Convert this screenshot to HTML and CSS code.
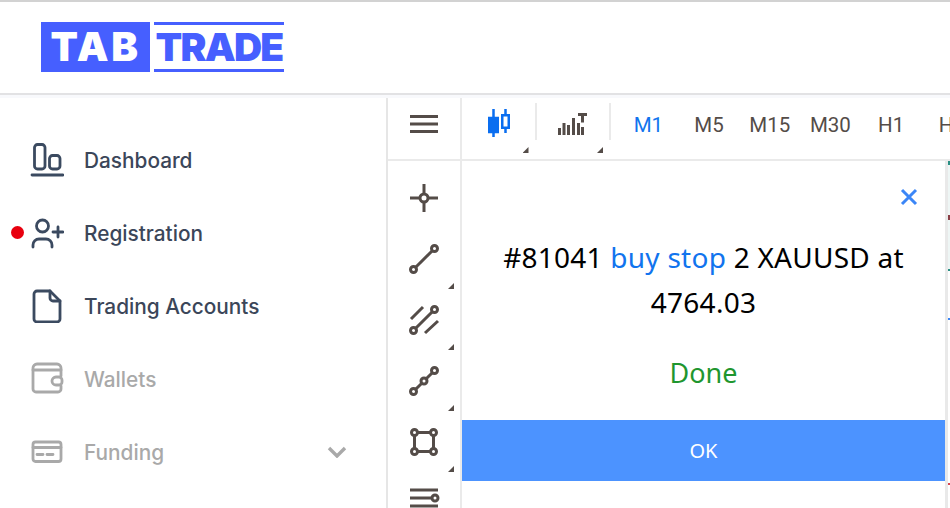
FILE: index.html
```html
<!DOCTYPE html>
<html lang="en">
  <head>
    <meta charset="UTF-8" />
    <meta name="viewport" content="width=device-width, initial-scale=1.0" />
    <title>TabTrade</title>
    <link rel="stylesheet" href="styles.css">
  </head>
  <body>
    <header class="header">
      <div class="logo">
        <span class="logo-tab">TAB</span>
        <span class="logo-trade">TRADE</span>
      </div>
    </header>

    <div class="main">
      <!-- Sidebar -->
      <nav class="sidebar">
        <a class="nav-item">
          <svg class="nav-icon" viewBox="0 0 34 34"><rect x="4.500" y="1.500" width="10.500" height="24.500" rx="3"/><rect x="19.500" y="12.500" width="10.500" height="13.500" rx="3"/><path d="M2 32h31"/></svg>
          <span>Dashboard</span>
        </a>
        <a class="nav-item">
          <i class="red-dot"></i>
          <svg class="nav-icon" viewBox="0 0 34 34"><circle cx="12.500" cy="10" r="6"/><path d="M3 31v-2a6 6 0 0 1 6-6h7a6 6 0 0 1 6 6v2M28 11v10M23 16h10"/></svg>
          <span>Registration</span>
        </a>
        <a class="nav-item">
          <svg class="nav-icon" viewBox="0 0 34 34"><path d="M7 2h13l10 10v18a3 3 0 0 1-3 3H7a3 3 0 0 1-3-3V5a3 3 0 0 1 3-3z"/><path d="M20 2v7a3 3 0 0 0 3 3h7"/></svg>
          <span>Trading Accounts</span>
        </a>
        <a class="nav-item disabled">
          <svg class="nav-icon" viewBox="0 0 34 34"><path d="M31 14v-8a4 4 0 0 0-4-4H7a4 4 0 0 0-4 4v21a3 3 0 0 0 3 3h22a3 3 0 0 0 3-3v-3"/><path d="M3 8h28M29 15h-3a4 4 0 0 0 0 8h3a3 3 0 0 0 3-3v-2a3 3 0 0 0-3-3z"/></svg>
          <span>Wallets</span>
        </a>
        <a class="nav-item disabled">
          <svg class="nav-icon" viewBox="0 0 34 34"><rect x="3" y="7" width="28" height="19.500" rx="2.500"/><path d="M3 12.500h28M7 19.500h6M17 19.500h6"/></svg>
          <span>Funding</span>
          <svg class="chevron" viewBox="0 0 20 12"><path d="M2 2l8 8 8-8"/></svg>
        </a>
      </nav>

      <!-- Terminal -->
      <section class="terminal">
        <div class="menu-cell">
          <svg class="menu-icon" viewBox="0 0 28 18"><path d="M0 1.500h28M0 9h28M0 16.500h28"/></svg>
        </div>

        <div class="topbar">
          <button class="chart-btn">
            <svg viewBox="0 0 24 28" class="candles"><path d="M5.500 0v28M17.500 0v24"/><rect class="solid" x="1.250" y="9" width="8.500" height="14"/><rect x="14.250" y="6.250" width="6.500" height="12.500"/></svg>
            <i class="corner"></i>
          </button>
          <button class="chart-btn">
            <svg viewBox="0 0 30 24" class="bars"><path d="M1.500 23v-7M6 23v-12M10.500 23v-10M15.500 23v-17M20.500 23v-12M24.500 23v-8M20 2.500h9M24.500 2.500v8"/></svg>
            <i class="corner"></i>
          </button>
          <div class="periods">
            <button class="period active">M1</button>
            <button class="period">M5</button>
            <button class="period">M15</button>
            <button class="period">M30</button>
            <button class="period">H1</button>
            <button class="period">H4</button>
          </div>
        </div>

        <div class="tools">
          <button class="tool">
            <svg viewBox="0 0 28 28"><circle cx="14" cy="14" r="4"/><path d="M14 0v9M14 19v9M0 14h9M19 14h9"/></svg>
          </button>
          <button class="tool">
            <svg viewBox="0 0 28 28"><circle cx="24.500" cy="3.500" r="3"/><circle cx="3.500" cy="24.500" r="3"/><path d="M22.300 5.700L5.700 22.300"/></svg>
            <i class="corner"></i>
          </button>
          <button class="tool">
            <svg viewBox="0 0 28 28"><circle cx="24.500" cy="3.500" r="3"/><circle cx="3.500" cy="24.500" r="3"/><path d="M22.300 5.700L5.700 22.300M1 13L13 1M15 27L28 15"/></svg>
            <i class="corner"></i>
          </button>
          <button class="tool">
            <svg viewBox="0 0 28 28"><circle cx="24.500" cy="3.500" r="3"/><circle cx="14" cy="14" r="3"/><circle cx="3.500" cy="24.500" r="3"/><path d="M22.300 5.700L16.200 11.800M11.800 16.200L5.700 22.300"/></svg>
            <i class="corner"></i>
          </button>
          <button class="tool">
            <svg viewBox="0 0 28 28"><circle cx="4.500" cy="4.500" r="3"/><circle cx="23.500" cy="4.500" r="3"/><circle cx="4.500" cy="23.500" r="3"/><circle cx="23.500" cy="23.500" r="3"/><path d="M7.500 4.500h13M7.500 23.500h13M4.500 7.500v13M23.500 7.500v13"/></svg>
            <i class="corner"></i>
          </button>
          <button class="tool">
            <svg viewBox="0 0 28 28"><circle cx="25" cy="9" r="3"/><path d="M0 1h28M0 9h22M0 17h28"/></svg>
          </button>
        </div>

        <div class="chart-area">
          <!-- Order result dialog -->
          <div class="dialog">
            <div class="dialog-top">
              <svg class="close-icon" viewBox="0 0 18 18"><path d="M2 2l14 14M16 2L2 16"/></svg>
            </div>
            <p class="dialog-text">#81041 <span class="buy">buy stop</span> 2 XAUUSD at 4764.03</p>
            <p class="dialog-status">Done</p>
            <button class="ok-btn">OK</button>
          </div>
          <div class="chart-edge">
            <i class="tint"></i>
            <i class="tick teal"></i>
            <i class="tick maroon"></i>
            <i class="tick teal2"></i>
            <i class="tick blue"></i>
            <i class="tick red"></i>
          </div>
        </div>
      </section>
    </div>
  </body>
</html>
```

FILE: styles.css
```css
* {
  box-sizing: border-box;
}

body {
  margin: 0;
  height: 508px;
  overflow: hidden;
  display: flex;
  flex-direction: column;
  font-family: "Inter", "Liberation Sans", sans-serif;
  background-color: #fff;
}

button {
  font-family: inherit;
  border: none;
  background: none;
  padding: 0;
}

svg {
  display: block;
  fill: none;
}

/* Header */
.header {
  height: 95px;
  flex: none;
  padding: 20px 0 0 41px;
  border-top: 2px solid #d2d2d2;
  border-bottom: 2px solid #e2e2e4;
}

.logo {
  display: flex;
  gap: 4px;
  height: 50px;
  font-weight: 900;
  font-size: 40px;
  line-height: 50px;
}

.logo-tab {
  width: 109px;
  text-align: center;
  letter-spacing: 2.500px;
  color: #fff;
  background-color: #465fff;
}

.logo-trade {
  width: 130px;
  text-align: center;
  color: #465fff;
  font-size: 39px;
  letter-spacing: -1.800px;
  border-top: 3px solid #465fff;
  border-bottom: 3px solid #465fff;
  line-height: 44px;
}

.main {
  flex: 1;
  min-height: 0;
  display: flex;
  padding-top: 3px;
  background-color: #f8f9fc;
}

/* Sidebar */
.sidebar {
  width: 388px;
  flex: none;
  padding-top: 25px;
  background-color: #fff;
  border-right: 2px solid #e6e6e6;
}

.nav-item {
  position: relative;
  height: 73px;
  display: flex;
  align-items: center;
  gap: 20px;
  padding: 0 39px 0 30px;
  font-size: 20.800px;
  font-weight: 500;
  color: #3b4659;
}

.nav-item span {
  padding-top: 2px;
}

.nav-icon {
  width: 34px;
  height: 34px;
  flex: none;
  stroke: #3b4a60;
  stroke-width: 2.800;
  stroke-linecap: round;
  stroke-linejoin: round;
}

.red-dot {
  position: absolute;
  left: 11px;
  top: 30px;
  width: 13px;
  height: 13px;
  border-radius: 50%;
  background-color: #e8000f;
}

.disabled {
  color: #a9a9a9;
}

.disabled .nav-icon {
  stroke: #a9a9a9;
}

.chevron {
  width: 20px;
  height: 12px;
  margin-left: auto;
  stroke: #a9a9a9;
  stroke-width: 3.400;
}

/* Terminal */
.terminal {
  flex: 1;
  min-width: 0;
  display: grid;
  grid-template-columns: 74px 1fr;
  grid-template-rows: 63px 1fr;
  background-color: #fff;
}

.menu-cell {
  padding: 17px 0 0 22px;
  border-right: 2px solid #eaeaea;
  border-bottom: 2px solid #eaeaea;
}

.menu-icon {
  width: 28px;
  height: 18px;
  stroke: #544c48;
  stroke-width: 3;
}

.topbar {
  display: flex;
  overflow: hidden;
  border-bottom: 2px solid #eaeaea;
}

.chart-btn {
  position: relative;
  width: 74.500px;
  flex: none;
  height: 37px;
  margin-top: 5px;
  display: flex;
  justify-content: center;
  padding-top: 6px;
  border-right: 2px solid #eaeaea;
}

.chart-btn .corner {
  right: 6px;
  bottom: -13px;
}

.candles {
  width: 24px;
  height: 28px;
  margin-left: 4px;
  stroke: #0a6ef0;
  stroke-width: 2.500;
}

.candles rect {
  fill: #fff;
}

.candles .solid {
  fill: #0a6ef0;
}

.bars {
  width: 30px;
  height: 24px;
  margin-top: 3px;
  stroke: #544c48;
  stroke-width: 3;
}

.periods {
  display: flex;
  padding-left: 7px;
  flex: none;
}

.period {
  width: 60.700px;
  flex: none;
  height: 53px;
  font-family: "Roboto", sans-serif;
  font-size: 20.500px;
  color: #544c48;
}

.period.active {
  color: #1174ee;
}

.tools {
  padding-top: 6px;
  overflow: hidden;
  border-right: 2px solid #eaeaea;
}

.tool {
  position: relative;
  width: 72px;
  height: 61px;
  display: flex;
  align-items: center;
  justify-content: center;
}

.tool svg {
  width: 28px;
  height: 28px;
  overflow: visible;
  stroke: #544c48;
  stroke-width: 3;
}

.corner {
  position: absolute;
  right: 6px;
  bottom: 0;
  width: 6px;
  height: 6px;
  background-color: #544c48;
  clip-path: polygon(100% 0, 100% 100%, 0 100%);
}

.chart-area {
  min-height: 0;
  display: flex;
}

/* Dialog */
.dialog {
  width: 483px;
  flex: none;
  text-align: center;
  font-family: "Noto Sans", sans-serif;
}

.dialog-top {
  display: flex;
  justify-content: flex-end;
  padding: 27px 27px 0 0;
  height: 74px;
}

.close-icon {
  width: 18px;
  height: 18px;
  stroke: #3b86f7;
  stroke-width: 3;
}

.dialog-text {
  margin: 0 35px;
  font-size: 28px;
  letter-spacing: 0.250px;
  line-height: 45px;
  color: #000;
}

.buy {
  color: #1174ee;
}

.dialog-status {
  margin: 25px 0 0;
  font-size: 27px;
  line-height: 45px;
  color: #1f962f;
}

.ok-btn {
  display: block;
  width: 100%;
  height: 61px;
  margin-top: 25px;
  font-size: 20px;
  color: #fff;
  background-color: #4c93ff;
}

/* Sliver of the chart behind the dialog */
.chart-edge {
  position: relative;
  flex: 1;
  border-left: 3px solid #e9e9e9;
}

.tint {
  position: absolute;
  left: 0;
  top: 0;
  right: 0;
  height: 108px;
  background-color: #eef6f5;
}

.tick {
  position: absolute;
  right: 0;
  width: 2px;
  height: 2px;
}

.teal {
  top: 0;
  height: 4px;
  background-color: #2a8f84;
}

.maroon {
  top: 54px;
  height: 5px;
  background-color: #8a3f46;
}

.teal2 {
  top: 108px;
  background-color: #2a8f84;
}

.blue {
  top: 157px;
  background-color: #3b86f7;
}

.red {
  top: 322px;
  background-color: #d9434e;
}
```
